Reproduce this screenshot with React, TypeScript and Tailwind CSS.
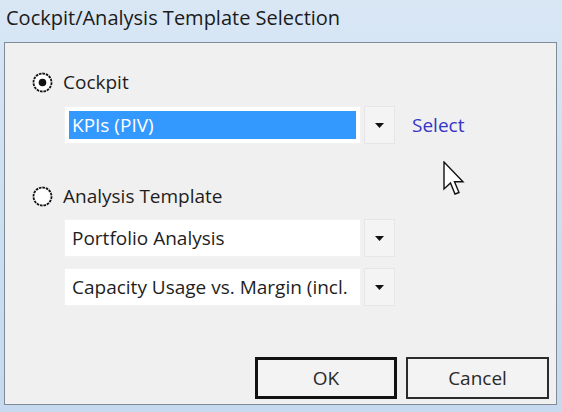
const font = { fontFamily: '"Segoe UI", "Open Sans", "Noto Sans", sans-serif' };

function Radio({ checked }: { checked?: boolean }) {
  return (
    <svg width="21" height="21" viewBox="0 0 21 21" className="shrink-0">
      <circle cx="10.5" cy="10.5" r="9" fill="#ffffff" stroke="#111111" strokeWidth="1.8" strokeDasharray="2.6 0.9" />
      {checked && <circle cx="10.5" cy="10.5" r="3.8" fill="#111111" />}
    </svg>
  );
}

function Combo({ label, selected }: { label: string; selected?: boolean }) {
  return (
    <div className="flex h-[38px] w-[331px] items-stretch">
      <div className="flex flex-1 items-center bg-white px-[4px] border border-[#f2f2f2]">
        {selected ? (
          <div className="flex h-[28px] w-full items-center bg-[#3399ff] px-[3px] text-white">{label}</div>
        ) : (
          <span className="px-[3px] text-[#1e1e1e] whitespace-nowrap overflow-hidden">{label}</span>
        )}
      </div>
      <div className="ml-[3px] flex w-[31px] items-center justify-center bg-[#f4f4f4] border border-[#e6e6e6]">
        <svg width="9" height="5" viewBox="0 0 9 5">
          <path d="M0 0 L9 0 L4.5 5 Z" fill="#111111" />
        </svg>
      </div>
    </div>
  );
}

export default function App() {
  return (
    <div
      className="relative flex h-[412px] w-[562px] flex-col bg-gradient-to-b from-[#d9e7f5] via-[#cddff1] to-[#c6d9ee] text-[19px]"
      style={font}
    >
      {/* title */}
      <div className="flex h-[42px] items-center pl-[6px] pb-[6px] text-[20px] text-[#1b1b1b]">
        Cockpit/Analysis Template Selection
      </div>

      {/* client area */}
      <div className="ml-[4px] mr-[5px] flex h-[363px] flex-col border border-[#7f8b97] bg-[#f0f0f0] pl-[27px] pr-[7px] pb-[5px]">
        <div className="mt-[28px] flex h-[22px] items-center gap-[10px] text-[#1e1e1e]">
          <Radio checked />
          <span>Cockpit</span>
        </div>

        <div className="ml-[32px] mt-[13px] flex items-center">
          <Combo label="KPIs (PIV)" selected />
          <span className="ml-[17px] text-[#3535c8]">Select</span>
        </div>

        <div className="mt-[41px] flex h-[22px] items-center gap-[10px] text-[#1e1e1e]">
          <Radio />
          <span>Analysis Template</span>
        </div>

        <div className="ml-[32px] mt-[12px] flex flex-col gap-[11px]">
          <Combo label="Portfolio Analysis" />
          <Combo label="Capacity Usage vs. Margin (incl." />
        </div>

        <div className="mt-auto flex justify-end gap-[9px]">
          <button className="h-[42px] w-[142px] border-[3px] border-[#111111] bg-[#f3f3f3] text-[#2a2a2a]">OK</button>
          <button className="h-[42px] w-[143px] border-2 border-[#2b2b2b] bg-[#f3f3f3] text-[#2a2a2a]">Cancel</button>
        </div>
      </div>

      {/* mouse pointer */}
      <svg className="absolute left-[443px] top-[161px]" width="24" height="37" viewBox="0 0 24 37">
        <path
          d="M1 1 L1 28 L7.5 22 L12 33 L16 31.5 L11.5 20.8 L20 20.8 Z"
          fill="#ffffff"
          stroke="#111111"
          strokeWidth="1.4"
          strokeLinejoin="miter"
        />
      </svg>
    </div>
  );
}
